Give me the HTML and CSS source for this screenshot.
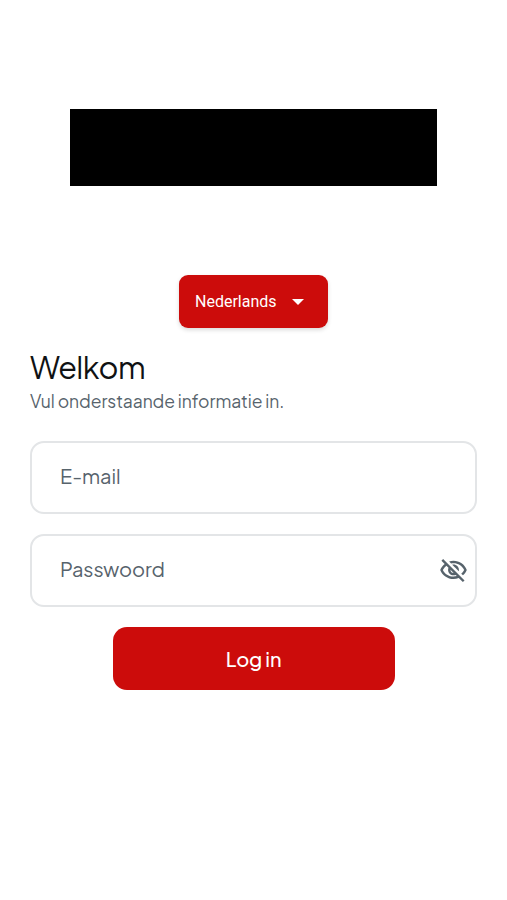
FILE: index.html
```html
<!DOCTYPE html>
<html lang="nl">
<head>
    <meta charset="UTF-8">
    <meta name="viewport" content="width=device-width, initial-scale=1.0">
    <title>Log in</title>
    <link rel="stylesheet" href="styles.css">
</head>
<body>

    <div class="logo"></div>

    <button class="language" type="button">
        <span>Nederlands</span>
        <svg class="arrow" viewBox="0 0 12 6"><path d="M0 0h12L6 6z"/></svg>
    </button>

    <h1>Welkom</h1>
    <p class="intro">Vul onderstaande informatie in.</p>

    <form>
        <div class="field">
            <input class="email" type="email" placeholder="E-mail" aria-label="E-mail">
        </div>
        <div class="field">
            <input class="password" type="password" placeholder="Passwoord" aria-label="Passwoord">
            <svg class="eye" viewBox="0 0 24 24">
                <path d="M12 6c3.79 0 7.17 2.13 8.82 5.5-.59 1.22-1.42 2.27-2.41 3.12l1.41 1.41c1.39-1.23 2.49-2.77 3.18-4.53C21.27 7.11 17 4 12 4c-1.27 0-2.49.2-3.64.57l1.65 1.65C10.66 6.09 11.32 6 12 6zm-1.07 1.14L13 9.21c.57.25 1.03.71 1.28 1.28l2.07 2.07c.08-.34.14-.7.14-1.07C16.5 9.01 14.48 7 12 7c-.37 0-.72.05-1.07.14zM2.01 3.87l2.68 2.68C3.06 7.83 1.77 9.53 1 11.5 2.73 15.89 7 19 12 19c1.52 0 2.98-.29 4.32-.82l3.42 3.42 1.41-1.41L3.42 2.45 2.01 3.87zm7.5 7.5l2.61 2.61c-.04.01-.08.02-.12.02-1.38 0-2.5-1.12-2.5-2.5 0-.05.01-.08.01-.13zm-3.4-3.4l1.75 1.75c-.23.55-.36 1.15-.36 1.78 0 2.48 2.02 4.5 4.5 4.5.63 0 1.23-.13 1.77-.36l.98.98c-.88.24-1.8.38-2.75.38-3.79 0-7.17-2.13-8.82-5.5.7-1.43 1.72-2.61 2.93-3.53z"/>
            </svg>
        </div>
        <button class="login" type="submit">Log in</button>
    </form>

</body>
</html>
```
FILE: styles.css
```css
* {
    box-sizing: border-box;
}
body {
    margin: 0;
    padding: 109px 30px 0;
    background-color: #fff;
    font-family: "Plus Jakarta Sans", Inter, sans-serif;
}
.logo {
    width: 367px;
    height: 77px;
    margin: 0 auto 89px;
    background-color: #000;
}
button {
    border: none;
    background-color: #cc0c0b;
    color: #fff;
    cursor: pointer;
}
.language {
    display: flex;
    align-items: center;
    justify-content: space-between;
    width: 149px;
    height: 53px;
    margin: 0 auto;
    padding: 0 24px 0 16px;
    border-radius: 9px;
    box-shadow: 0 2px 4px rgba(0, 0, 0, 0.15);
    font-family: Roboto, sans-serif;
    font-size: 16px;
}
.arrow {
    width: 12px;
    height: 6px;
    fill: #fff;
}
h1 {
    margin: 20px 0 0;
    color: #101213;
    font-size: 30.5px;
    font-weight: 400;
    line-height: 38px;
    letter-spacing: -0.6px;
}
.intro {
    margin: 4px 0 28px;
    color: #57636c;
    font-size: 17.5px;
    line-height: 23px;
    letter-spacing: -0.05px;
}
.field {
    display: flex;
    align-items: center;
    height: 73px;
    margin-bottom: 20px;
    padding: 0 7px 0 28px;
    border: 2px solid #e3e5e7;
    border-radius: 14px;
}
.field input {
    flex: 1;
    min-width: 0;
    padding: 0 0 5px;
    border: none;
    outline: none;
    background: none;
    font-family: inherit;
    font-size: 20px;
    letter-spacing: -0.1px;
}
.field input::placeholder {
    color: #57636c;
    opacity: 1;
}
.eye {
    width: 29px;
    height: 29px;
    fill: #57636c;
}
.login {
    display: block;
    width: 282px;
    height: 63px;
    margin: 0 auto;
    border-radius: 14px;
    font-family: inherit;
    font-size: 20px;
    font-weight: 500;
    letter-spacing: -0.2px;
}
```
